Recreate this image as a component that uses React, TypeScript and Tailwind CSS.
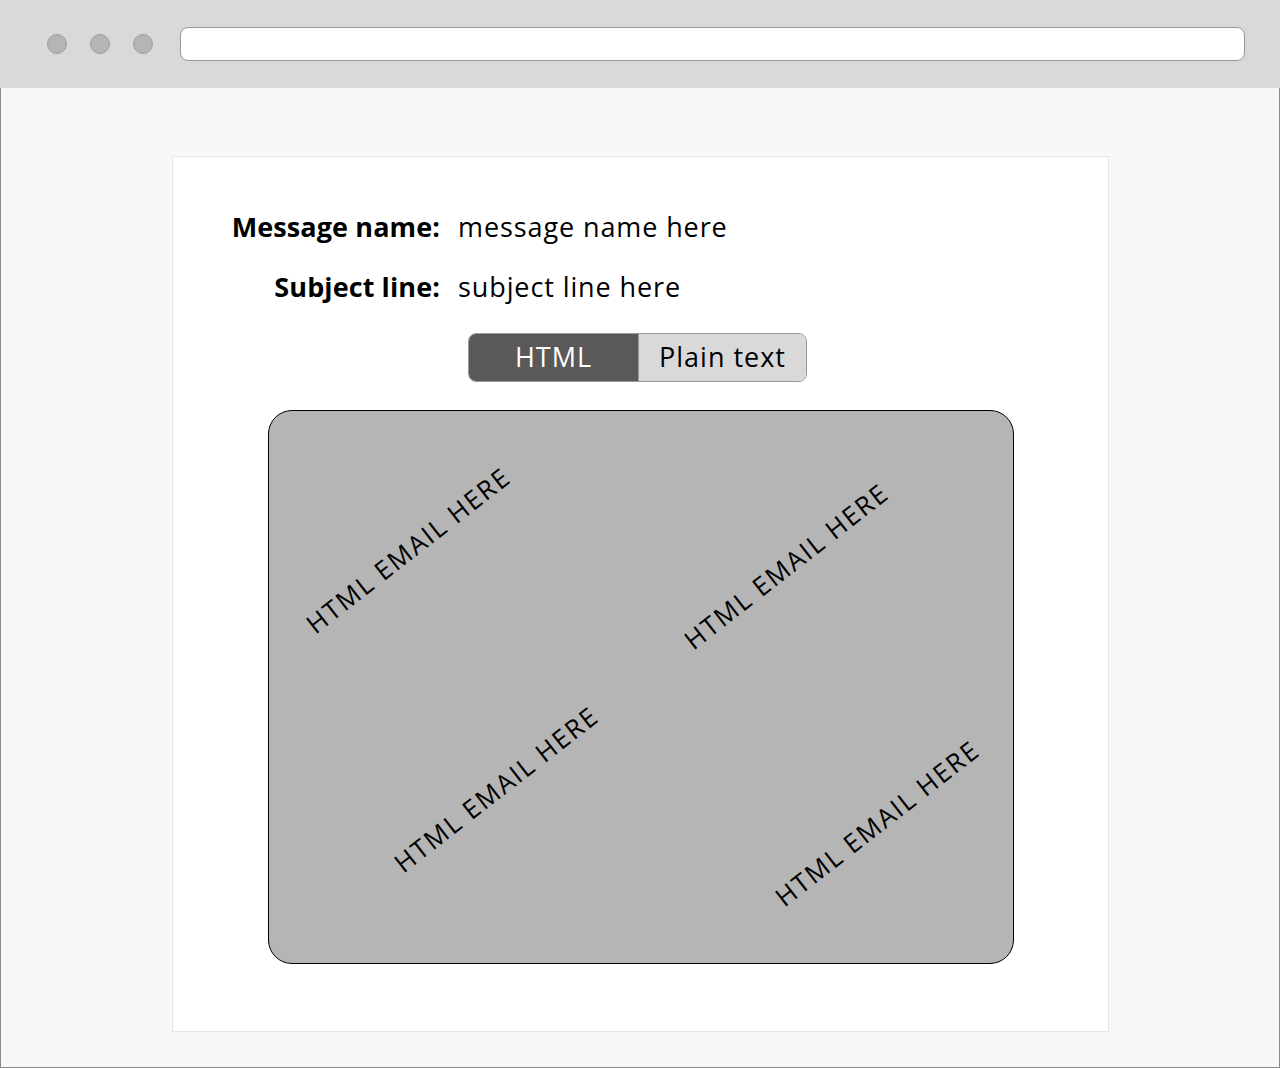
import React from 'react';

const stamps = [
  { left: 'left-[139px]', top: 'top-[139px]' },
  { left: 'left-[517px]', top: 'top-[155px]' },
  { left: 'left-[227px]', top: 'top-[378px]' },
  { left: 'left-[608px]', top: 'top-[412px]' },
];

export default function App() {
  return (
    <div className="w-[1280px] h-[1068px] flex flex-col font-['Open_Sans','Liberation_Sans',sans-serif] text-black">
      {/* Browser chrome */}
      <div className="h-[88px] bg-[#d9d9d9] flex items-center pl-[47px] pr-[35px]">
        <div className="flex gap-[23px] shrink-0">
          <span className="w-[20px] h-[20px] rounded-full bg-[#b5b5b5] border border-[#9e9e9e]" />
          <span className="w-[20px] h-[20px] rounded-full bg-[#b5b5b5] border border-[#9e9e9e]" />
          <span className="w-[20px] h-[20px] rounded-full bg-[#b5b5b5] border border-[#9e9e9e]" />
        </div>
        <div className="ml-[27px] flex-1 h-[34px] bg-white border border-[#989898] rounded-[8px]" />
      </div>

      {/* Page */}
      <div className="flex-1 bg-[#f8f8f8] border-l border-r border-b border-[#8c8c8c] pt-[68px] pl-[171px]">
        <div className="w-[937px] h-[876px] bg-white border border-[#e6e6e6] flex flex-col">
          <div className="mt-[56px] flex flex-col gap-[32px]">
            <div className="flex items-center h-[28px]">
              <span className="w-[267px] text-right text-[27px] font-bold tracking-[0.1px]">Message name:</span>
              <span className="ml-[18px] text-[27px] tracking-[0.9px]">message name here</span>
            </div>
            <div className="flex items-center h-[28px]">
              <span className="w-[267px] text-right text-[27px] font-bold tracking-[0.1px]">Subject line:</span>
              <span className="ml-[18px] text-[27px] tracking-[0.9px]">subject line here</span>
            </div>
          </div>

          <div className="mt-[32px] ml-[295px] flex w-[339px] h-[49px] rounded-[8px] border border-[#999] overflow-hidden text-[27px] tracking-[1px]">
            <div className="w-[169px] bg-[#595959] text-white flex items-center justify-center">HTML</div>
            <div className="flex-1 bg-[#d9d9d9] border-l border-[#999] flex items-center justify-center">Plain text</div>
          </div>

          <div className="relative mt-[28px] ml-[95px] w-[746px] h-[554px] bg-[#b5b5b5] border border-black rounded-[24px] overflow-hidden">
            {stamps.map((s, i) => (
              <span
                key={i}
                className={`absolute ${s.left} ${s.top} -translate-x-1/2 -translate-y-1/2 -rotate-[38deg] whitespace-nowrap text-[26px] tracking-[1.8px] leading-none`}
              >
                HTML EMAIL HERE
              </span>
            ))}
          </div>
        </div>
      </div>
    </div>
  );
}
